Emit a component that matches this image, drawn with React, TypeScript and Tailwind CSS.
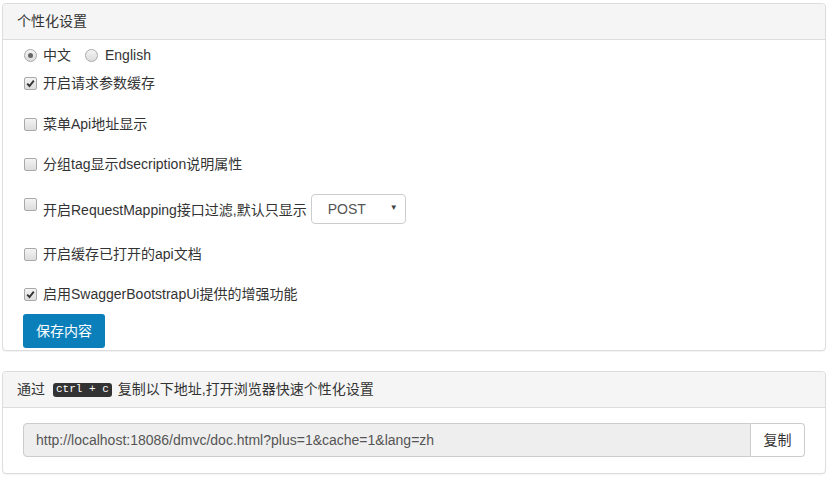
import React, { useState } from "react";

const font = {
  fontFamily: '"Liberation Sans", Arial, "Noto Sans CJK SC", sans-serif',
};

function Box({ checked }: { checked: boolean }) {
  return (
    <span className="relative inline-flex h-[13px] w-[13px] shrink-0 items-center justify-center rounded-[2px] border border-[#a9a9a9] bg-gradient-to-b from-[#f4f4f4] to-[#dcdcdc]">
      {checked && (
        <svg width="9" height="9" viewBox="0 0 9 9">
          <path d="M1.2 4.6 L3.5 7 L7.8 1.6" fill="none" stroke="#333" strokeWidth="1.9" />
        </svg>
      )}
    </span>
  );
}

function Radio({ checked }: { checked: boolean }) {
  return (
    <span className="inline-flex h-[13px] w-[13px] shrink-0 items-center justify-center rounded-full border border-[#a9a9a9] bg-gradient-to-b from-[#f4f4f4] to-[#dcdcdc]">
      {checked && <span className="h-[5px] w-[5px] rounded-full bg-[#666]" />}
    </span>
  );
}

function CheckRow({ label, checked, className = "" }: { label: string; checked: boolean; className?: string }) {
  return (
    <label className={`flex h-5 items-center ${className}`}>
      <span className="ml-[1px] mr-[6px] flex">
        <Box checked={checked} />
      </span>
      <span>{label}</span>
    </label>
  );
}

export default function App() {
  const [lang] = useState("zh");
  const url = "http://localhost:18086/dmvc/doc.html?plus=1&cache=1&lang=zh";

  return (
    <div className="min-h-[479px] bg-white pl-[2px] pt-[3px] text-[14px] text-[#333]" style={font}>
      {/* 个性化设置 */}
      <div className="w-[824px] rounded border border-[#ddd] bg-white shadow-[0_1px_1px_rgba(0,0,0,0.05)]">
        <div className="flex h-[36px] items-center rounded-t border-b border-[#ddd] bg-[#f5f5f5] px-[14px]">
          个性化设置
        </div>
        <div className="px-5 pb-[2px] pt-[5px]">
          <div className="flex h-5 items-center">
            <span className="ml-[1px] mr-[6px] flex">
              <Radio checked={lang === "zh"} />
            </span>
            <span>中文</span>
            <span className="ml-[14px] mr-[7px] flex">
              <Radio checked={lang === "en"} />
            </span>
            <span>English</span>
          </div>
          <CheckRow className="mt-2" label="开启请求参数缓存" checked />
          <CheckRow className="mt-[21px]" label="菜单Api地址显示" checked={false} />
          <CheckRow className="mt-5" label="分组tag显示dsecription说明属性" checked={false} />
          <div className="mt-5 flex h-[30px] items-center">
            <span className="ml-[1px] mr-[6px] flex self-start pt-[4px]">
              <Box checked={false} />
            </span>
            <span className="pt-[2px]">开启RequestMapping接口过滤,默认只显示</span>
            <div className="relative ml-[4px] flex h-[30px] w-[95px] items-center rounded border border-[#ccc] bg-white pl-4 text-[#555]">
              POST
              <span className="absolute right-[7px] top-[9px] text-[8px] leading-none text-[#444]">▼</span>
            </div>
          </div>
          <CheckRow className="mt-5" label="开启缓存已打开的api文档" checked={false} />
          <CheckRow className="mt-5" label="启用SwaggerBootstrapUi提供的增强功能" checked />
          <button className="mt-[10px] h-[34px] w-[82px] rounded-[3px] bg-[#0b7fba] text-white">
            保存内容
          </button>
        </div>
      </div>

      {/* 快速设置地址 */}
      <div className="mt-5 w-[824px] rounded border border-[#ddd] bg-white shadow-[0_1px_1px_rgba(0,0,0,0.05)]">
        <div className="flex h-[36px] items-center rounded-t border-b border-[#ddd] bg-[#f5f5f5] px-[14px]">
          <span>通过</span>
          <kbd
            className="ml-[8px] mr-[6px] inline-flex h-[14px] items-center rounded-[3px] bg-[#333] px-[3px] text-[11px] leading-none text-white"
            style={{ fontFamily: '"Liberation Mono", "DejaVu Sans Mono", monospace' }}
          >
            ctrl + c
          </kbd>
          <span>复制以下地址,打开浏览器快速个性化设置</span>
        </div>
        <div className="px-5 pb-[16px] pt-[15px]">
          <div className="flex h-[34px]">
            <input
              readOnly
              value={url}
              className="h-[34px] flex-1 rounded-l border border-[#ccc] bg-[#eee] px-3 text-[14px] text-[#555] outline-none"
              style={font}
            />
            <button className="h-[34px] w-[54px] rounded-r border border-l-0 border-[#ccc] bg-white text-[#333]">
              复制
            </button>
          </div>
        </div>
      </div>
    </div>
  );
}
